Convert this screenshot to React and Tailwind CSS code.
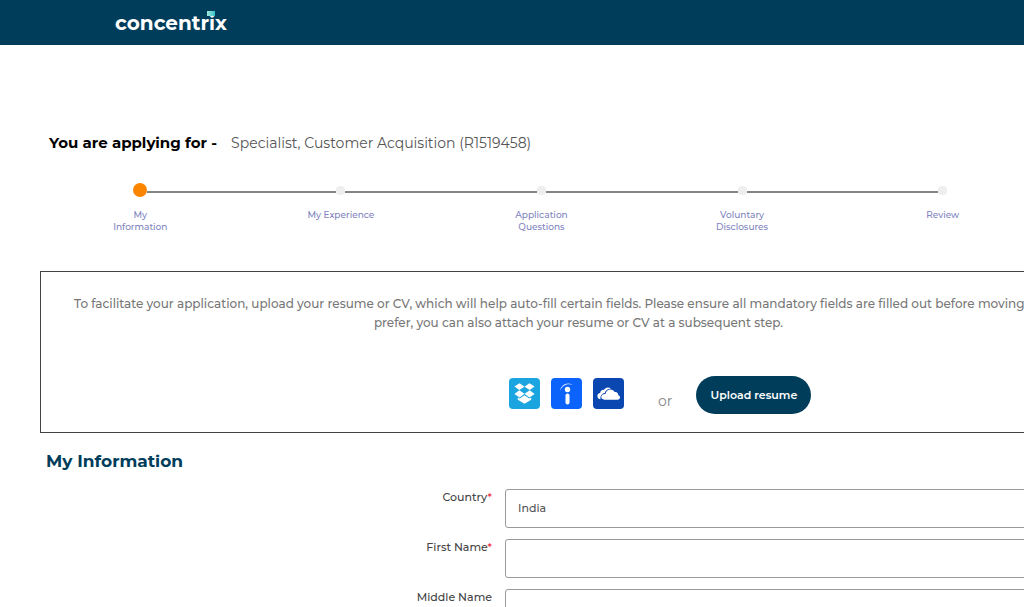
const steps = [
  { name: "My Information", active: true },
  { name: "My Experience", wide: true },
  { name: "Application Questions" },
  { name: "Voluntary Disclosures" },
  { name: "Review" },
];

const fields = [
  { id: "firstName", label: "First Name", required: true },
  { id: "middleName", label: "Middle Name", required: false },
];

function DropboxIcon() {
  return (
    <svg viewBox="0 0 31 31" className="size-full" aria-hidden="true">
      <g fill="#fff">
        <path d="M10.6 5.2 15.5 8.7 10.3 12.1 5.4 8.5Z" />
        <path d="M20.4 5.2 25.6 8.5 20.7 12.1 15.5 8.7Z" />
        <path d="M10.3 12.3 15.5 15.7 10.6 19.4 5.4 16.1Z" />
        <path d="M20.7 12.3 25.6 16.1 20.4 19.4 15.5 15.7Z" />
        <path d="M15.5 17.3 20.4 20.6 22.2 19.6V21.8L15.5 25.8 8.8 21.8V19.6L10.6 20.6Z" />
      </g>
    </svg>
  );
}

function IndeedIcon() {
  return (
    <svg viewBox="0 0 31 31" className="size-full" aria-hidden="true">
      <circle cx="16.5" cy="11.5" r="2.7" fill="#fff" />
      <rect x="14.5" y="15.4" width="4" height="11" rx="2" fill="#fff" />
      <path
        d="M8.8 13.2C9.8 7.4 15.3 3.2 21.6 6.9 15.8 5.2 11.5 7.5 8.8 13.2Z"
        fill="#fff"
        fillOpacity="0.8"
      />
    </svg>
  );
}

function OneDriveIcon() {
  return (
    <svg viewBox="0 0 31 31" className="size-full" aria-hidden="true">
      <path
        d="M7.6 21.3C5.4 21.1 4.2 19.7 4.4 17.8 4.6 16.2 5.8 15.2 7.2 15.1 7.2 13 8.9 11.6 10.9 11.9 12.3 9.4 15.6 8.6 18 10.7 14.8 10.4 12.5 12.2 11.8 14.9 8.6 15.3 6.9 18.3 7.6 21.3Z"
        fill="#fff"
      />
      <path
        d="M11.4 21.7C9.4 21.7 8.1 20.3 8.3 18.6 8.5 16.9 10 15.7 12.6 15.9 12.8 13.2 14.9 11.3 17.5 11.4 19.4 11.5 20.8 12.4 21.7 14 24 13.7 25.4 15.2 25.3 17.2 26.7 17.6 27.2 18.6 27 19.7 26.8 21 25.8 21.7 24.6 21.7Z"
        fill="#fff"
      />
    </svg>
  );
}

function Logo() {
  return (
    <a
      href="#"
      className="relative inline-block text-xl font-bold leading-6 text-white"
    >
      concentrix
      <span className="absolute right-3 top-0 h-[5px] w-2 bg-linear-to-r from-[#9fe8dc] to-[#25c6c9]" />
    </a>
  );
}

function Stepper() {
  return (
    <ol className="mr-[74px] grid grid-cols-5">
      {steps.map((step, i) => (
        <li key={step.name}>
          <div className="flex h-3.5 items-center">
            <span
              className={`mt-1 h-0.5 flex-1 ${i === 0 ? "bg-transparent" : "bg-[#838583]"}`}
            />
            {step.active ? (
              <span className="size-3.5 rounded-full bg-[#fb8500]" />
            ) : (
              <span className="size-[9px] rounded-sm bg-[#eeeeee]" />
            )}
            <span
              className={`mt-1 h-0.5 flex-1 ${i === steps.length - 1 ? "bg-transparent" : "bg-[#838583]"}`}
            />
          </div>
          <p
            className={`mx-auto mt-3 text-center text-[9px] font-medium leading-3 text-[#8184c0] ${step.wide ? "w-24" : "w-16"}`}
          >
            {step.name}
          </p>
        </li>
      ))}
    </ol>
  );
}

function UploadBox() {
  return (
    <section className="mt-[38px] border border-[#444444] pb-[18px] pt-[22px]">
      <p className="whitespace-nowrap text-center text-xs font-medium leading-[19px] text-[#777777]">
        To facilitate your application, upload your resume or CV, which will
        help auto-fill certain fields. Please ensure all mandatory fields are
        filled out before moving on. If you
        <br />
        prefer, you can also attach your resume or CV at a subsequent step.
      </p>
      <div className="ml-[468px] mt-11 flex items-start">
        <div className="mt-0.5 flex gap-[11px]">
          <button
            type="button"
            aria-label="Dropbox"
            className="size-[31px] overflow-hidden rounded-sm bg-[#1ba5e0]"
          >
            <DropboxIcon />
          </button>
          <button
            type="button"
            aria-label="Indeed"
            className="size-[31px] overflow-hidden rounded-sm bg-[#0b63fb]"
          >
            <IndeedIcon />
          </button>
          <button
            type="button"
            aria-label="OneDrive"
            className="size-[31px] overflow-hidden rounded-sm bg-[#0a47b0]"
          >
            <OneDriveIcon />
          </button>
        </div>
        <span className="ml-[34px] mt-[15px] text-sm leading-5 text-[#888888]">
          or
        </span>
        <button
          type="button"
          className="ml-6 h-[38px] w-[115px] rounded-full bg-[#003d5b] text-[11px] font-semibold text-white"
        >
          Upload resume
        </button>
      </div>
    </section>
  );
}

function Row({ id, label, required, children }) {
  return (
    <div className="flex gap-[13px]">
      <label
        htmlFor={id}
        className="w-[452px] text-right text-[11px] font-medium leading-4 text-[#444444]"
      >
        {label}
        {required && <span className="text-[#f03040]">*</span>}
      </label>
      {children}
    </div>
  );
}

export default function App() {
  return (
    <div className="overflow-x-hidden bg-white font-['Montserrat','Inter',sans-serif]">
      <header className="flex h-[45px] items-start bg-[#003d5b] pl-[115px] pt-[11px]">
        <Logo />
      </header>
      <main className="min-w-[1157px] px-10 pb-8">
        <div className="flex items-center gap-3.5 pb-7 pl-[9px] pt-[86px] leading-6">
          <h1 className="text-[15px] font-bold text-black">
            You are applying for -
          </h1>
          <p className="text-sm leading-6 text-[#555555]">
            Specialist, Customer Acquisition (R1519458)
          </p>
        </div>
        <Stepper />
        <UploadBox />
        <h2 className="ml-1.5 mt-4 text-[17px] font-bold leading-6 text-[#003d5b]">
          My Information
        </h2>
        <form className="mt-4 flex flex-col gap-[11px]">
          <Row id="country" label="Country" required>
            <select
              id="country"
              className="h-[39px] flex-1 appearance-none rounded-[3px] border border-[#999999] bg-white px-3 text-[11px] font-medium text-[#555555]"
            >
              <option>India</option>
            </select>
          </Row>
          {fields.map((field) => (
            <Row key={field.id} {...field}>
              <input
                id={field.id}
                type="text"
                className="h-[39px] flex-1 rounded-[3px] border border-[#999999] px-3 text-[11px] font-medium text-[#555555]"
              />
            </Row>
          ))}
        </form>
      </main>
    </div>
  );
}
